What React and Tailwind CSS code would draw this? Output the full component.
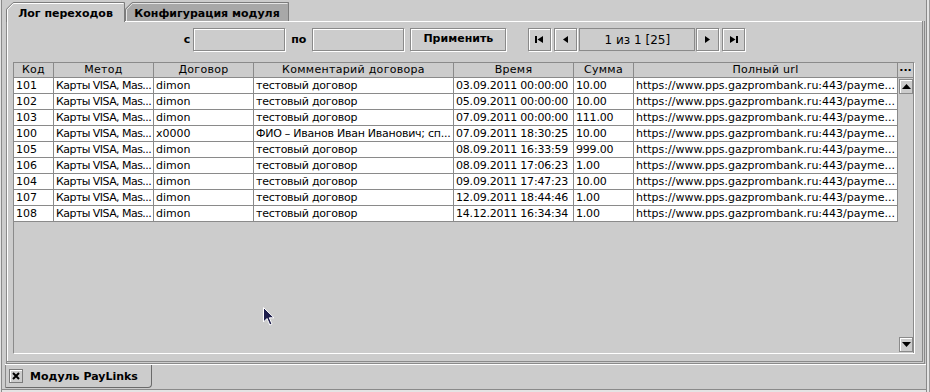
import React from "react";

const columns = [
  { t: "Код", w: "w-[40px]", tr: "" },
  { t: "Метод", w: "w-[100px]", tr: "tracking-[-0.55px]" },
  { t: "Договор", w: "w-[100px]", tr: "" },
  { t: "Комментарий договора", w: "w-[200px]", tr: "tracking-[-0.25px]" },
  { t: "Время", w: "w-[120px]", tr: "tracking-[-0.2px]" },
  { t: "Сумма", w: "w-[60px]", tr: "tracking-[-0.2px]" },
  { t: "Полный url", w: "w-[264px]", tr: "" },
];

const METHOD = "Карты VISA, Mas...";
const URL = "https://www.pps.gazprombank.ru:443/payme...";
const rows = [
  ["101", METHOD, "dimon", "тестовый договор", "03.09.2011 00:00:00", "10.00", URL],
  ["102", METHOD, "dimon", "тестовый договор", "05.09.2011 00:00:00", "10.00", URL],
  ["103", METHOD, "dimon", "тестовый договор", "07.09.2011 00:00:00", "111.00", URL],
  ["100", METHOD, "x0000", "ФИО – Иванов Иван Иванович; сп...", "07.09.2011 18:30:25", "10.00", URL],
  ["105", METHOD, "dimon", "тестовый договор", "08.09.2011 16:33:59", "999.00", URL],
  ["106", METHOD, "dimon", "тестовый договор", "08.09.2011 17:06:23", "1.00", URL],
  ["104", METHOD, "dimon", "тестовый договор", "09.09.2011 17:47:23", "10.00", URL],
  ["107", METHOD, "dimon", "тестовый договор", "12.09.2011 18:44:46", "1.00", URL],
  ["108", METHOD, "dimon", "тестовый договор", "14.12.2011 16:34:34", "1.00", URL],
];

const etched = "border border-[#8a8a8a] shadow-[inset_1px_1px_0_#ffffff,1px_1px_0_#ffffff]";

function NavIcon({ kind }) {
  return (
    <svg width="9" height="7" viewBox="0 0 9 7">
      {kind === "first" && (
        <>
          <rect x="0" y="0" width="2" height="7" fill="#000" />
          <polygon points="8,0 2.5,3.5 8,7" fill="#000" />
        </>
      )}
      {kind === "prev" && <polygon points="7,0 2,3.5 7,7" fill="#000" />}
      {kind === "next" && <polygon points="2,0 7,3.5 2,7" fill="#000" />}
      {kind === "last" && (
        <>
          <polygon points="1,0 6.5,3.5 1,7" fill="#000" />
          <rect x="7" y="0" width="2" height="7" fill="#000" />
        </>
      )}
    </svg>
  );
}

function NavButton({ kind, className = "" }) {
  return (
    <div className={`${etched} ${className} w-[23px] h-[23px] bg-[#cccccc] flex items-center justify-center`}>
      <NavIcon kind={kind} />
    </div>
  );
}

function ScrollButton({ up }) {
  return (
    <div className="w-[14px] h-[15px] bg-[#cccccc] border border-[#8a8a8a] shadow-[inset_1px_1px_0_#ffffff] flex items-center justify-center">
      <svg width="9" height="5" viewBox="0 0 9 5">
        {up ? <polygon points="0,5 4.5,0 9,5" fill="#000" /> : <polygon points="0,0 4.5,5 9,0" fill="#000" />}
      </svg>
    </div>
  );
}

export default function App() {
  return (
    <div className="relative w-[930px] h-[392px] bg-[#cccccc] text-black overflow-hidden font-['DejaVu_Sans',sans-serif] text-[11px] shadow-[inset_1px_0_0_#e4e4e4,inset_2px_0_0_#8a8a8a,inset_-1px_0_0_#9a9a9a,inset_-3px_0_0_#e4e4e4,inset_-4px_0_0_#8a8a8a,inset_0_-2px_0_#e4e4e4,inset_0_-3px_0_#8a8a8a]">
      <div className="flex flex-col">
        {/* top tabs */}
        <div className="relative z-10 flex h-[21px] pl-[6px]">
          <div className="relative mt-[2px] w-[119px] h-[20px] flex justify-center">
            <svg className="absolute inset-0" width="119" height="20" viewBox="0 0 119 20">
              <path d="M0 20 V7 L7 0 H119 V20 Z" fill="#cccccc" />
              <path d="M0.5 20 V7.2 L7.2 0.5 H118.5 V20" fill="none" stroke="#7c7c7c" />
              <path d="M1.5 20 V7.6 L7.6 1.5 H117.5" fill="none" stroke="#ffffff" />
            </svg>
            <span className="relative pt-[5px] leading-[13px] font-bold">Лог переходов</span>
          </div>
          <div className="relative mt-[2px] w-[164px] h-[19px] flex justify-center">
            <svg className="absolute inset-0" width="164" height="19" viewBox="0 0 164 19">
              <path d="M0 19 V7 L7 0 H164 V19 Z" fill="#a8a8a8" />
              <path d="M0.5 19 V7.2 L7.2 0.5 H163.5 V19" fill="none" stroke="#7c7c7c" />
              <path d="M1.5 19 V7.6 L7.6 1.5 H162.5" fill="none" stroke="#e6e6e6" />
            </svg>
            <span className="relative pt-[5px] leading-[13px] font-bold">Конфигурация модуля</span>
          </div>
        </div>

        {/* panel */}
        <div className="ml-[6px] w-[919px] h-[343px] border-l border-l-[#8a8a8a] border-r-[3px] border-b-[3px] border-double border-r-[#8a8a8a] border-b-[#8a8a8a] shadow-[inset_1px_1px_0_#ffffff] flex flex-col pl-[6px] pt-[7px]">
          {/* toolbar */}
          <div className="flex items-center justify-center h-[23px] pr-[6px]">
            <span className="font-bold leading-[13px]">с</span>
            <div className={`${etched} ml-[3px] w-[92px] h-[23px] bg-[#cccccc]`} />
            <span className="font-bold leading-[13px] ml-[6px]">по</span>
            <div className={`${etched} ml-[6px] w-[92px] h-[23px] bg-[#cccccc]`} />
            <div className={`${etched} ml-[6px] w-[96px] h-[23px] bg-[#cccccc] flex items-center justify-center font-bold`}>
              Применить
            </div>
            <NavButton kind="first" className="ml-[22px]" />
            <NavButton kind="prev" className="ml-[3px]" />
            <div className="ml-[2px] w-[116px] h-[23px] border border-[#8a8a8a] flex items-center justify-center text-[12px]">
              1 из 1 [25]
            </div>
            <NavButton kind="next" className="ml-[1px]" />
            <NavButton kind="last" className="ml-[3px]" />
          </div>

          {/* table scroll pane */}
          <div className="mt-[11px] w-[902px] h-[292px] border border-t-[#8a8a8a] border-l-[#8a8a8a] border-r-white border-b-white flex">
            <div className="w-[884px] flex flex-col">
              <div className="flex h-[15px]">
                {columns.map((c) => (
                  <div
                    key={c.t}
                    className={`${c.w} h-[15px] border-r border-b border-[#8a8a8a] text-center leading-[14px] tracking-[0.3px] whitespace-nowrap overflow-hidden`}
                  >
                    {c.t}
                  </div>
                ))}
              </div>
              {rows.map((r, i) => (
                <div key={i} className="flex h-[16px] bg-white">
                  {r.map((v, j) => (
                    <div
                      key={j}
                      className={`${columns[j].w} ${columns[j].tr} h-[16px] border-r border-b border-[#8a8a8a] pl-[2px] leading-[15px] whitespace-nowrap overflow-hidden`}
                    >
                      {v}
                    </div>
                  ))}
                </div>
              ))}
            </div>
            <div className="w-[16px] flex flex-col border-r border-[#8a8a8a]">
              <div className="h-[15px] border-b border-[#8a8a8a] flex items-start justify-center font-bold leading-[9px] text-[11px]">
                ...
              </div>
              <div className="flex-1 flex flex-col justify-between pl-[1px] py-[1px]">
                <ScrollButton up />
                <ScrollButton />
              </div>
            </div>
          </div>
        </div>

        {/* bottom tab bar */}
        <div className="h-[28px] pl-[5px] pr-[4px]">
          <div className="h-[1px] bg-white" />
          <div className="flex">
            <div className="w-[147px] h-[23px] border-l border-l-[#8a8a8a] border-r border-b border-r-[#6a6a6a] border-b-[#6a6a6a] rounded-br-[4px] flex items-center">
              <div className="ml-[3px] w-[14px] h-[14px] border border-[#7a7a7a] shadow-[inset_1px_1px_0_#ffffff] flex items-center justify-center">
                <svg width="8" height="8" viewBox="0 0 8 8">
                  <path d="M1 1 L7 7 M7 1 L1 7" stroke="#000" strokeWidth="2" />
                </svg>
              </div>
              <span className="ml-[7px] font-bold leading-[13px]">Модуль PayLinks</span>
            </div>
          </div>
        </div>
      </div>

      {/* mouse cursor */}
      <svg className="absolute left-[262px] top-[306px]" width="14" height="21" viewBox="0 0 14 21">
        <path d="M1.5 1.5 V16 L5 12.5 L7.8 19 L10 18 L7.3 11.8 H12 Z" fill="#1c1c4a" stroke="#ffffff" strokeWidth="1" />
      </svg>
    </div>
  );
}
